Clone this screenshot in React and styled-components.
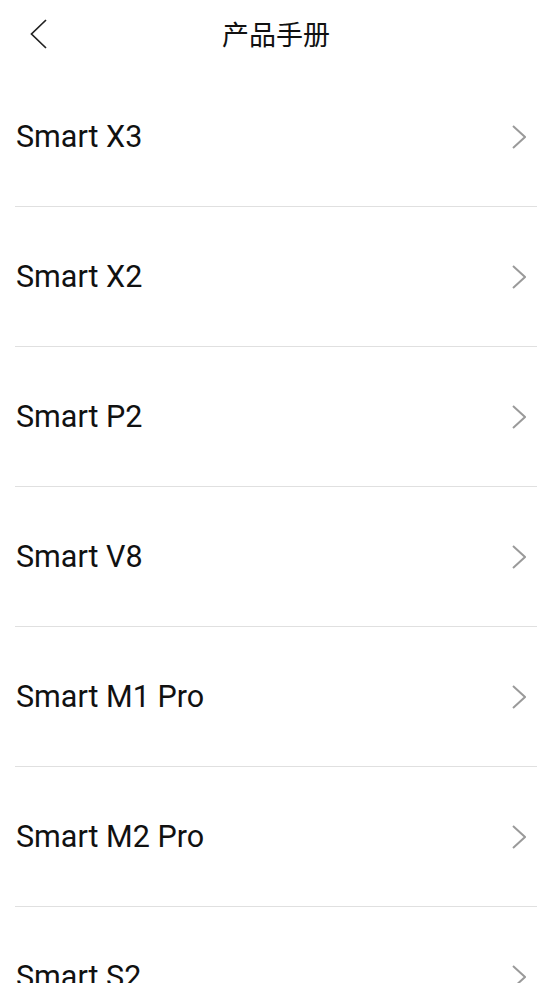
import React from "react";
import styled, { createGlobalStyle } from "styled-components";

const Global = createGlobalStyle`
  html, body { margin: 0; padding: 0; background: #fff; }
  body { font-family: Roboto, "Noto Sans CJK SC", sans-serif; overflow: hidden; }
`;

const Page = styled.div`
  width: 552px;
  background: #fff;
`;

const Header = styled.header`
  height: 67px;
  display: grid;
  grid-template-columns: 66px 1fr 66px;
  align-items: center;
`;

const BackButton = styled.button`
  border: 0;
  background: none;
  padding: 0 0 0 30px;
  height: 67px;
  display: flex;
  align-items: center;
  cursor: pointer;
`;

const Title = styled.h1`
  margin: 0;
  text-align: center;
  font-family: "Noto Sans CJK SC", sans-serif;
  font-weight: 400;
  font-size: 27px;
  color: #111;
  line-height: 1;
`;

const List = styled.ul`
  list-style: none;
  margin: 0 15px;
  padding: 0;
`;

const Row = styled.li`
  height: 139px;
  border-bottom: 1px solid #e0e0e0;
  display: flex;
  align-items: center;
  justify-content: space-between;
  padding: 0 11px 0 1px;
`;

const Name = styled.span`
  font-family: Roboto, sans-serif;
  font-size: 30.5px;
  color: #111;
`;

const Chevron = () => (
  <svg width="14" height="24" viewBox="0 0 14 24" fill="none">
    <path d="M1 1 L13 12 L1 23" stroke="#9a9a9a" strokeWidth="2" />
  </svg>
);

const BackIcon = () => (
  <svg width="17" height="30" viewBox="0 0 17 30" fill="none">
    <path d="M16 1 L1.5 15 L16 29" stroke="#222" strokeWidth="1.7" />
  </svg>
);

const items = [
  "Smart X3",
  "Smart X2",
  "Smart P2",
  "Smart V8",
  "Smart M1 Pro",
  "Smart M2 Pro",
  "Smart S2",
];

export default function App() {
  return (
    <Page>
      <Global />
      <Header>
        <BackButton aria-label="back">
          <BackIcon />
        </BackButton>
        <Title>产品手册</Title>
        <span />
      </Header>
      <List>
        {items.map((it) => (
          <Row key={it}>
            <Name>{it}</Name>
            <Chevron />
          </Row>
        ))}
      </List>
    </Page>
  );
}
